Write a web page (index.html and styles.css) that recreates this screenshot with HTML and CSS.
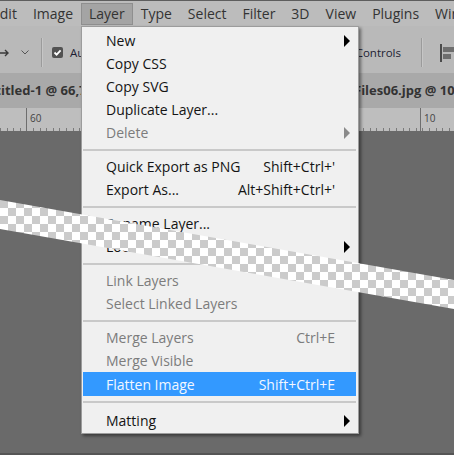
FILE: index.html
```html
<!DOCTYPE html>
<html>
<head>
    <title>Layer menu</title>
    <link rel="stylesheet" href="styles.css">
</head>
<body>
    <div class="app">
        <nav class="menubar">
            <span class="menubar-item first">Edit</span>
            <span class="menubar-item">Image</span>
            <span class="menubar-item active">Layer</span>
            <span class="menubar-item">Type</span>
            <span class="menubar-item">Select</span>
            <span class="menubar-item">Filter</span>
            <span class="menubar-item">3D</span>
            <span class="menubar-item">View</span>
            <span class="menubar-item">Plugins</span>
            <span class="menubar-item">Window</span>
        </nav>

        <div class="options">
            <svg class="move-icon" width="12" height="16" viewBox="0 0 12 16">
                <path d="M-4 8H10M7 5l3 3-3 3" fill="none" stroke="#3a3a3a" stroke-width="1.4"/>
            </svg>
            <svg class="chevron" width="8" height="5" viewBox="0 0 8 5">
                <polyline points="0.5,0.5 4,4 7.5,0.5" fill="none" stroke="#555" stroke-width="1"/>
            </svg>
            <span class="divider"></span>
            <span class="checkbox">
                <svg width="11" height="11" viewBox="0 0 11 11">
                    <polyline points="2.5,5.5 4.6,7.6 8.6,3.4" fill="none" stroke="#fff" stroke-width="1.8"/>
                </svg>
            </span>
            <span class="opt-text">Auto-Select</span>

            <div class="opt-right">
                <span class="opt-text">Show Transform Controls</span>
                <span class="divider"></span>
                <svg class="align-icon" width="14" height="20" viewBox="0 0 14 20">
                    <rect x="0" y="1" width="2" height="18" fill="#4a4a4a"/>
                    <rect x="3" y="4" width="11" height="5" fill="#6e6e6e"/>
                    <rect x="3" y="11" width="8" height="5" fill="#6e6e6e"/>
                </svg>
            </div>
        </div>

        <div class="tabs">
            <span class="tab first">Untitled-1 @ 66,7% (Layer 1, RGB/8)</span>
            <span class="tab">Files06.jpg @ 100%</span>
        </div>

        <div class="ruler">
            <span class="mark" style="left: 26px;">60</span>
            <span class="mark" style="left: 420px;">10</span>
        </div>

        <div class="canvas"></div>

        <!-- Layer dropdown -->
        <div class="dropdown">
            <div class="item"><span class="label">New</span><span class="key"></span><span class="sub"><i class="arrow"></i></span></div>
            <div class="item"><span class="label">Copy CSS</span><span class="key"></span><span class="sub"></span></div>
            <div class="item"><span class="label">Copy SVG</span><span class="key"></span><span class="sub"></span></div>
            <div class="item"><span class="label">Duplicate Layer...</span><span class="key"></span><span class="sub"></span></div>
            <div class="item disabled"><span class="label">Delete</span><span class="key"></span><span class="sub"><i class="arrow"></i></span></div>
            <div class="sep"></div>
            <div class="item"><span class="label">Quick Export as PNG</span><span class="key">Shift+Ctrl+'</span><span class="sub"></span></div>
            <div class="item"><span class="label">Export As...</span><span class="key">Alt+Shift+Ctrl+'</span><span class="sub"></span></div>
            <div class="sep"></div>
            <div class="item"><span class="label">Rename Layer...</span><span class="key"></span><span class="sub"></span></div>
            <div class="item"><span class="label">Lock Layers...</span><span class="key"></span><span class="sub"><i class="arrow"></i></span></div>
            <div class="sep"></div>
            <div class="item disabled"><span class="label">Link Layers</span><span class="key"></span><span class="sub"></span></div>
            <div class="item disabled"><span class="label">Select Linked Layers</span><span class="key"></span><span class="sub"></span></div>
            <div class="sep"></div>
            <div class="item disabled"><span class="label">Merge Layers</span><span class="key">Ctrl+E</span><span class="sub"></span></div>
            <div class="item disabled"><span class="label">Merge Visible</span><span class="key"></span><span class="sub"></span></div>
            <div class="item hover"><span class="label">Flatten Image</span><span class="key">Shift+Ctrl+E</span><span class="sub"></span></div>
            <div class="sep last"></div>
            <div class="item"><span class="label">Matting</span><span class="key"></span><span class="sub"><i class="arrow"></i></span></div>
        </div>

        <!-- transparent layer band -->
        <div class="strip"></div>
    </div>
</body>
</html>
```

FILE: styles.css
```css
body {
    margin: 0;
    font-family: "Open Sans", "Noto Sans", sans-serif;
}
.app {
    position: relative;
    width: 454px;
    height: 455px;
    overflow: hidden;
    display: flex;
    flex-direction: column;
    background: #6a6a6a;
}

/* top menu bar */
.menubar {
    display: flex;
    flex-shrink: 0;
    height: 23px;
    padding-top: 2px;
    border-top: 1px solid #5e5e5e;
    background: #bcbcbc;
    font-size: 14px;
    color: #333;
    white-space: nowrap;
}
.menubar-item {
    height: 22px;
    line-height: 22px;
    padding: 0 8px;
}
.menubar-item.first {
    margin-left: -16px;
}
.menubar-item.active {
    background: #a4a4a4;
    box-shadow: inset 0 0 0 1px #8f8f8f;
}

/* options bar */
.options {
    display: flex;
    flex-shrink: 0;
    align-items: center;
    height: 47px;
    box-sizing: border-box;
    padding-top: 6px;
    background: #b9b9b9;
    font-size: 11.5px;
    color: #1d1d33;
    white-space: nowrap;
}
.move-icon {
    margin-left: -2px;
}
.chevron {
    margin-left: 11px;
}
.divider {
    width: 1px;
    height: 29px;
    background: #9b9b9b;
    box-shadow: 1px 0 0 #c6c6c6;
}
.options > .divider {
    margin-left: 12px;
}
.checkbox {
    display: flex;
    width: 11px;
    height: 11px;
    margin-left: 10px;
    border-radius: 2px;
    background: #525252;
}
.opt-text {
    margin-left: 7px;
}
.opt-right {
    display: flex;
    align-items: center;
    margin-left: auto;
}
.opt-right .divider {
    margin-left: 20px;
}
.align-icon {
    margin-left: 18px;
}

/* document tabs */
.tabs {
    display: flex;
    flex-shrink: 0;
    align-items: center;
    height: 35px;
    padding-bottom: 2px;
    box-sizing: border-box;
    background: #a9a9a9;
    font-size: 13px;
    font-weight: 700;
    color: #333;
    white-space: nowrap;
}
.tab.first {
    margin-left: -23px;
    width: 377px;
    flex-shrink: 0;
}

/* ruler */
.ruler {
    position: relative;
    flex-shrink: 0;
    height: 23px;
    background-color: #bebebe;
    background-image: repeating-linear-gradient(90deg, #7a7a7a 0 1px, transparent 1px 6.6px);
    background-size: 100% 3px;
    background-position: 0.4px 100%;
    background-repeat: no-repeat;
}
.mark {
    position: absolute;
    top: 0;
    height: 23px;
    padding: 3px 0 0 3px;
    box-sizing: border-box;
    border-left: 1px solid #6e6e6e;
    font-size: 10px;
    color: #444;
}

.canvas {
    flex: 1;
    background: #6a6a6a;
    border-bottom: 2px solid #555;
}

/* dropdown menu */
.dropdown {
    position: absolute;
    left: 81px;
    top: 26px;
    width: 273px;
    padding: 2px 2px 1px 1px;
    border: 1px solid #9c9c9c;
    background: #f0f0f0;
    box-shadow: 2px 2px 3px rgba(0, 0, 0, 0.45);
    font-size: 14px;
    color: #141414;
    white-space: nowrap;
}
.item {
    display: flex;
    align-items: center;
    height: 23px;
    padding-left: 23px;
}
.label {
    flex: 1;
}
.key {
    margin-right: 2px;
}
.sub {
    display: flex;
    justify-content: center;
    width: 19px;
}
.arrow {
    width: 0;
    height: 0;
    border-top: 6px solid transparent;
    border-bottom: 6px solid transparent;
    border-left: 6px solid #000;
}
.item.disabled {
    color: #7c7c7c;
}
.item.disabled .arrow {
    border-left-color: #8a8a8a;
}
.item.hover {
    height: 24px;
    background: #3399ff;
    color: #f2f7ff;
}
.sep {
    height: 2px;
    margin: 5px 0 4px 0;
    background: #c9c9c9;
}
.sep.last {
    margin: 5px 0 6px 0;
}

/* transparent layer band drawn over everything */
.strip {
    position: absolute;
    left: 0;
    top: 0;
    width: 454px;
    height: 455px;
    background: repeating-conic-gradient(#cbcbcb 0 25%, #ffffff 0 50%) 0 0 / 16px 16px;
    clip-path: polygon(0 200px, 454px 280px, 454px 309px, 0 229px);
}
```
